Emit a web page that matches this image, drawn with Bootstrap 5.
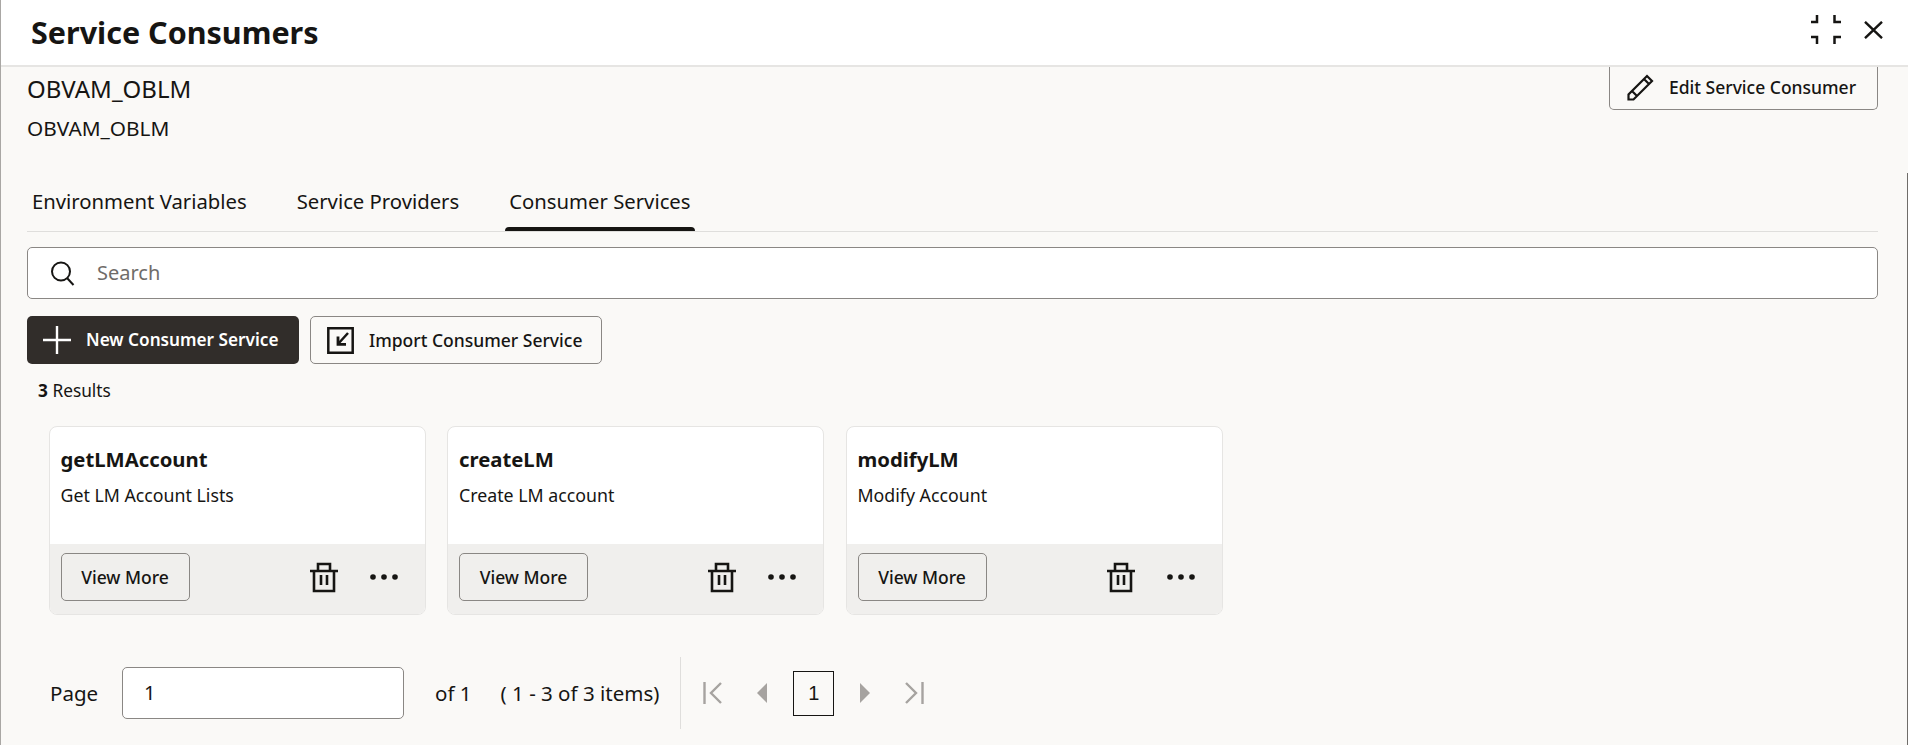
<!doctype html>
<html lang="en">
<head>
<meta charset="utf-8">
<title>Service Consumers</title>
<link rel="stylesheet" href="https://cdn.jsdelivr.net/npm/bootstrap@5.3.0/dist/css/bootstrap.min.css">
<style>
html,body{height:100%;overflow:hidden}
body{background:#faf9f7;color:#161513;font-family:"Noto Sans","Liberation Sans",sans-serif;font-size:17px;border-left:1px solid #a9a7a4;position:relative}
body::after{content:"";position:absolute;right:0;top:173px;bottom:0;width:1px;background:#6f6d6a}
.dlg-head{height:67px;background:#fff;border-bottom:2px solid #e6e5e3;padding:0 25px 0 30px}
.dlg-title{font-size:30.5px;font-weight:700;margin:0;line-height:1}
.head-tools{gap:23px;margin-bottom:6px}
.head-icon{background:none;border:0;padding:0;display:flex}
.dlg-body{padding:0 30px 0 26px;height:678px;overflow:hidden}
.summary-row{height:114px}
.name-main{font-size:24px;line-height:1;padding-top:10px}
.name-sub{font-size:20.8px;line-height:1;padding-top:17px}
.btn-outline{--bs-btn-border-color:#8a8784;--bs-btn-color:#161513;--bs-btn-hover-bg:transparent;--bs-btn-hover-color:#161513;--bs-btn-border-radius:5px;font-size:17.5px;font-weight:500;background:transparent;height:48px;padding:0 18px;display:inline-flex;align-items:center;gap:14px;border:1px solid #8a8784}
.edit-btn{height:43px;border-top:0;border-top-left-radius:0;border-top-right-radius:0;width:269px;padding:0 16px 2px 17px;gap:15px;justify-content:flex-start}
.tab-bar{border-bottom:1px solid #dfdedc;height:51px;gap:50px;padding:5px 5px 0}
.tab-item{font-size:20.3px;color:#161513;position:relative;line-height:24px;padding-top:3px;text-decoration:none}
.tab-item.is-on::after{content:"";position:absolute;left:-4px;right:-4px;bottom:0;height:4px;background:#161513;border-radius:4px 4px 0 0}
.search-box{height:52px;margin-top:15px;background:#fff;border:1px solid #8a8784;border-radius:5px;padding:0 22px;gap:22px}
.search-box input{border:0;outline:0;flex:1;font-size:20px;background:transparent;padding:0}
.search-box input::placeholder{color:#6f6c69}
.action-row{margin-top:17px;gap:11px}
.new-btn{background:#312d2a;color:#fff;border:0;width:272px;height:48px;border-radius:5px;font-size:17.2px;font-weight:600;padding:0 16px;gap:15px}
.import-btn{width:292px;gap:15px;padding:0 16px}
.results-line{font-size:17.3px;margin:17px 0 0 11px;line-height:20px}
.svc-grid{margin:25px 0 0 21.500px;gap:21.500px}
.svc-card{width:377px;height:189px;border:1px solid #e6e5e3;border-radius:8px;background:#fff;overflow:hidden}
.svc-top{height:117px;padding:19px 11px 0}
.svc-title{font-size:20.3px;font-weight:700;margin:0;line-height:26px}
.svc-desc{font-size:17.750px;margin:12px 0 0;line-height:22px}
.svc-foot{height:71px;background:#f0efed;padding:9px 11px 0}
.view-btn{width:129px;justify-content:center;padding:0}
.foot-icons{margin-left:auto;padding-right:16px;gap:32px}
.pager{margin-top:42px;height:72px;padding-left:23px}
.pager-field{width:282px;height:52px;border:1px solid #8a8784;border-radius:5px;background:#fff;margin:0 31px 0 24px;padding:0 21px;font-size:20px;display:flex;align-items:center}
.pager-text{font-size:20.500px}
.pager-of{margin-right:29px}
.pager-sep{width:1px;height:72px;background:#dfdedc;margin:0 22px 0 21px}
.pager-far{margin-left:35px}
.page-cell{width:41px;height:45px;border:1px solid #161513;display:flex;align-items:center;justify-content:center;font-size:20px;font-family:"Liberation Sans",sans-serif;margin:0 26px}
</style>
</head>
<body>
<header class="dlg-head d-flex align-items-center justify-content-between">
  <h1 class="dlg-title">Service Consumers</h1>
  <div class="head-tools d-flex align-items-center">
    <button class="head-icon" aria-label="Collapse"><svg width="30" height="29" viewBox="0 0 30 29" fill="none" stroke="#161513" stroke-width="2.500"><path d="M6 0v7H0M23.500 0v7H30M6 29v-7H0M23.500 29v-7H30"/></svg></button>
    <button class="head-icon" aria-label="Close"><svg width="19" height="18" viewBox="0 0 19 18" fill="none" stroke="#161513" stroke-width="2.400"><path d="M1 .8l17 16.400M18 .8L1 17.200"/></svg></button>
  </div>
</header>
<main class="dlg-body">
  <section class="summary-row d-flex justify-content-between align-items-start">
    <div>
      <div class="name-main">OBVAM_OBLM</div>
      <div class="name-sub">OBVAM_OBLM</div>
    </div>
    <button class="btn btn-outline edit-btn"><svg width="27" height="27" viewBox="0 0 27 27" fill="none" stroke="#161513" stroke-width="2.200"><path d="M1.500 25.500v-5L20 2l5 5L6.500 25.500zM5 17l5 5M17 5l5 5"/></svg>Edit Service Consumer</button>
  </section>
  <nav class="tab-bar d-flex">
    <a class="tab-item" href="#">Environment Variables</a>
    <a class="tab-item" href="#">Service Providers</a>
    <a class="tab-item is-on" href="#">Consumer Services</a>
  </nav>
  <div class="search-box d-flex align-items-center">
    <svg width="25" height="25" viewBox="0 0 25 25" fill="none" stroke="#161513" stroke-width="2"><circle cx="11" cy="10.500" r="9"/><path d="M17 17l6.500 7"/></svg>
    <input type="text" placeholder="Search" aria-label="Search">
  </div>
  <div class="action-row d-flex">
    <button class="btn new-btn d-inline-flex align-items-center"><svg width="28" height="28" viewBox="0 0 28 28" fill="none" stroke="#fff" stroke-width="2.400"><path d="M14 0v28M0 14h28"/></svg>New Consumer Service</button>
    <button class="btn btn-outline import-btn"><svg width="27" height="27" viewBox="0 0 27 27" fill="none" stroke="#161513" stroke-width="2.500"><path d="M1.300 1.300h24.400v24.400H1.300zM21 6L11 17"/><path stroke-width="2.800" d="M11 9.500v7.800h8"/></svg>Import Consumer Service</button>
  </div>
  <p class="results-line"><strong>3</strong> Results</p>
  <div class="svc-grid d-flex">
    <article class="svc-card">
      <div class="svc-top"><h2 class="svc-title">getLMAccount</h2><p class="svc-desc">Get LM Account Lists</p></div>
      <div class="svc-foot d-flex align-items-start">
        <button class="btn btn-outline view-btn">View More</button>
        <div class="foot-icons d-flex align-items-center">
          <svg width="28" height="48" viewBox="0 0 28 48" fill="none" stroke="#161513" stroke-width="2.600"><path d="M0 18h28M4 18v20h20V18M8 17v-6h12v6M11 22v10M17 22v10"/></svg>
          <svg width="28" height="48" viewBox="0 0 28 48" fill="#161513"><circle cx="3" cy="24" r="2.800"/><circle cx="14" cy="24" r="2.800"/><circle cx="25" cy="24" r="2.800"/></svg>
        </div>
      </div>
    </article>
    <article class="svc-card">
      <div class="svc-top"><h2 class="svc-title">createLM</h2><p class="svc-desc">Create LM account</p></div>
      <div class="svc-foot d-flex align-items-start">
        <button class="btn btn-outline view-btn">View More</button>
        <div class="foot-icons d-flex align-items-center">
          <svg width="28" height="48" viewBox="0 0 28 48" fill="none" stroke="#161513" stroke-width="2.600"><path d="M0 18h28M4 18v20h20V18M8 17v-6h12v6M11 22v10M17 22v10"/></svg>
          <svg width="28" height="48" viewBox="0 0 28 48" fill="#161513"><circle cx="3" cy="24" r="2.800"/><circle cx="14" cy="24" r="2.800"/><circle cx="25" cy="24" r="2.800"/></svg>
        </div>
      </div>
    </article>
    <article class="svc-card">
      <div class="svc-top"><h2 class="svc-title">modifyLM</h2><p class="svc-desc">Modify Account</p></div>
      <div class="svc-foot d-flex align-items-start">
        <button class="btn btn-outline view-btn">View More</button>
        <div class="foot-icons d-flex align-items-center">
          <svg width="28" height="48" viewBox="0 0 28 48" fill="none" stroke="#161513" stroke-width="2.600"><path d="M0 18h28M4 18v20h20V18M8 17v-6h12v6M11 22v10M17 22v10"/></svg>
          <svg width="28" height="48" viewBox="0 0 28 48" fill="#161513"><circle cx="3" cy="24" r="2.800"/><circle cx="14" cy="24" r="2.800"/><circle cx="25" cy="24" r="2.800"/></svg>
        </div>
      </div>
    </article>
  </div>
  <div class="pager d-flex align-items-center">
    <span class="pager-text">Page</span>
    <div class="pager-field">1</div>
    <span class="pager-text pager-of">of 1</span>
    <span class="pager-text">( 1 - 3 of 3 items)</span>
    <span class="pager-sep"></span>
    <svg width="19" height="24" viewBox="0 0 19 24" fill="none" stroke="#a6a3a0" stroke-width="2.400"><path d="M1.500 1v22M18 2L8 12l10 10"/></svg>
    <svg class="pager-far" width="10" height="20" viewBox="0 0 10 20" fill="#a6a3a0"><path d="M10 0v20L0 10z"/></svg>
    <div class="page-cell">1</div>
    <svg width="10" height="20" viewBox="0 0 10 20" fill="#a6a3a0"><path d="M0 0v20l10-10z"/></svg>
    <svg class="pager-far" width="19" height="24" viewBox="0 0 19 24" fill="none" stroke="#a6a3a0" stroke-width="2.400"><path d="M17.500 1v22M1 2l10 10L1 22"/></svg>
  </div>
</main>
<script src="https://cdn.jsdelivr.net/npm/bootstrap@5.3.0/dist/js/bootstrap.bundle.min.js"></script>
</body>
</html>
